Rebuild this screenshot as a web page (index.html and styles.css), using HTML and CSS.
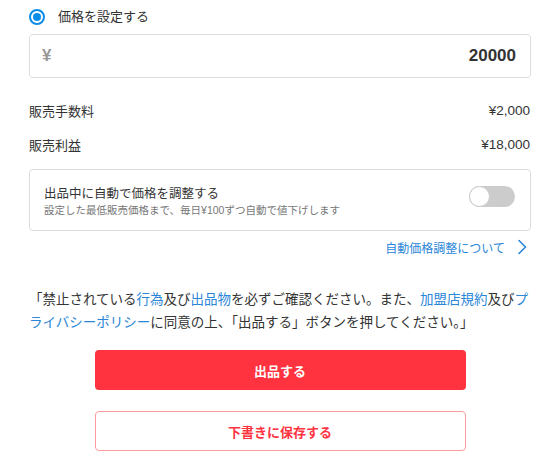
FILE: index.html
```html
<!DOCTYPE html>
<html lang="ja">
<head>
    <meta charset="UTF-8">
    <meta name="viewport" content="width=device-width, initial-scale=1.0">
    <title>出品</title>
    <link rel="stylesheet" href="styles.css">
</head>
<body>
    <div class="page">
        <label class="radio-row">
            <span class="radio"><span class="radio-dot"></span></span>
            <span class="radio-label">価格を設定する</span>
        </label>

        <div class="price-input">
            <span class="yen">¥</span>
            <span class="price-value">20000</span>
        </div>

        <div class="fees">
            <div class="fee-row">
                <span>販売手数料</span>
                <span class="num">¥2,000</span>
            </div>
            <div class="fee-row">
                <span>販売利益</span>
                <span class="num">¥18,000</span>
            </div>
        </div>

        <div class="auto-box">
            <div class="auto-text">
                <div class="auto-title">出品中に自動で価格を調整する</div>
                <div class="auto-sub">設定した最低販売価格まで、毎日¥100ずつ自動で値下げします</div>
            </div>
            <span class="toggle"><span class="knob"></span></span>
        </div>

        <div class="help-link">
            <a href="#">自動価格調整について</a>
            <svg class="chevron" width="10" height="16" viewBox="0 0 10 16">
                <path d="M2 1.5 L8.5 8 L2 14.5" fill="none" stroke="#2a86d8" stroke-width="1.6" stroke-linecap="round" stroke-linejoin="round"/>
            </svg>
        </div>

        <p class="notice">「禁止されている<a href="#">行為</a>及び<a href="#">出品物</a>を必ずご確認ください。また、<a href="#">加盟店規約</a>及び<a href="#">プライバシーポリシー</a>に同意の上、「出品する」ボタンを押してください。」</p>

        <div class="actions">
            <button class="btn btn-primary">出品する</button>
            <button class="btn btn-outline">下書きに保存する</button>
        </div>
    </div>
</body>
</html>
```

FILE: styles.css
```css
body {
    margin: 0;
    font-family: "Liberation Sans", "Noto Sans CJK JP", sans-serif;
    color: #333;
    background-color: #fff;
}

.page {
    padding: 0 19px 0 29px;
}

a {
    color: #2a86d8;
    text-decoration: none;
}

.radio-row {
    display: flex;
    align-items: center;
    height: 34px;
}

.radio {
    box-sizing: border-box;
    width: 16px;
    height: 16px;
    border: 2px solid #0a8de8;
    border-radius: 50%;
    display: flex;
    align-items: center;
    justify-content: center;
}

.radio-dot {
    width: 8px;
    height: 8px;
    border-radius: 50%;
    background-color: #0a8de8;
}

.radio-label {
    margin-left: 13px;
    font-size: 13px;
    line-height: 18px;
}

.price-input {
    box-sizing: border-box;
    height: 44px;
    border: 1px solid #ddd;
    border-radius: 4px;
    display: flex;
    align-items: center;
    justify-content: space-between;
    padding: 0 14px 0 12px;
}

.yen {
    color: #999;
    font-size: 17px;
    font-weight: bold;
}

.price-value {
    font-size: 17px;
    font-weight: bold;
    color: #333;
}

.fees {
    margin-top: 15px;
}

.fee-row {
    display: flex;
    justify-content: space-between;
    align-items: center;
    height: 34px;
    font-size: 13px;
}

.num {
    font-size: 13.5px;
    margin-right: 1px;
}

.auto-box {
    box-sizing: border-box;
    margin-top: 8px;
    height: 62px;
    border: 1px solid #ddd;
    border-radius: 4px;
    display: flex;
    align-items: center;
    justify-content: space-between;
    padding: 0 15px 0 14px;
}

.auto-text {
    padding-top: 4px;
}

.auto-title {
    font-size: 12.5px;
    line-height: 16px;
}

.auto-sub {
    font-size: 10.5px;
    line-height: 16px;
    color: #777;
}

.toggle {
    box-sizing: border-box;
    width: 46px;
    height: 21px;
    border-radius: 11px;
    background-color: #ccc;
    display: flex;
    align-items: center;
    margin-bottom: 8px;
}

.knob {
    box-sizing: border-box;
    width: 21px;
    height: 21px;
    border-radius: 50%;
    background-color: #fff;
    border: 1px solid #ccc;
}

.help-link {
    margin-top: 4px;
    height: 24px;
    display: flex;
    justify-content: flex-end;
    align-items: center;
    padding-right: 4px;
    font-size: 12px;
}

.chevron {
    margin-left: 12px;
}

.notice {
    margin: 29px 0 0;
    font-size: 13.5px;
    line-height: 23px;
}

.actions {
    display: flex;
    flex-direction: column;
    align-items: center;
    margin-top: 16px;
    gap: 21px;
}

.btn {
    box-sizing: border-box;
    width: 371px;
    height: 40px;
    border-radius: 4px;
    font-family: "Liberation Sans", "Noto Sans CJK JP", sans-serif;
    font-size: 13px;
    font-weight: bold;
    cursor: pointer;
}

.btn-primary {
    background-color: #ff333f;
    color: #fff;
    border: none;
}

.btn-outline {
    background-color: #fff;
    color: #ff333f;
    border: 1.5px solid #ff9a9f;
}
```
